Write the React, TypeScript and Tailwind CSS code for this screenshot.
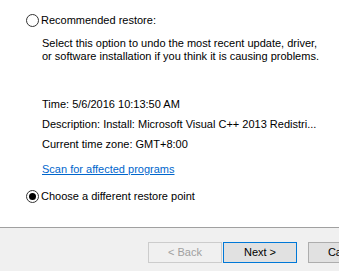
function Radio({ checked }: { checked?: boolean }) {
  return (
    <span className="w-[13px] h-[13px] rounded-full border border-[#333333] bg-white flex items-center justify-center shrink-0">
      {checked && <span className="w-[7px] h-[7px] rounded-full bg-black" />}
    </span>
  );
}

export default function App() {
  return (
    <div className="w-[339px] h-[271px] flex flex-col text-[11px] text-black font-['Liberation_Sans',Arial,sans-serif] overflow-hidden">
      <div className="h-[227px] bg-white pl-[26px] pt-[13px] whitespace-nowrap">
        <div className="flex items-center gap-[2px] h-[15px] leading-[15px]">
          <Radio />
          <span>Recommended restore:</span>
        </div>

        <div className="ml-[16px] mt-[9px] leading-[13px]">
          <p>Select this option to undo the most recent update, driver,</p>
          <p>or software installation if you think it is causing problems.</p>
        </div>

        <div className="ml-[16px] mt-[31px] leading-[20px]">
          <p>Time: 5/6/2016 10:13:50 AM</p>
          <p>Description: Install: Microsoft Visual C++ 2013 Redistri...</p>
          <p>Current time zone: GMT+8:00</p>
          <p className="mt-[5px]">
            <a className="text-[#0066cc] underline">Scan for affected programs</a>
          </p>
        </div>

        <div className="flex items-center gap-[2px] h-[15px] leading-[15px] mt-[10px]">
          <Radio checked />
          <span>Choose a different restore point</span>
        </div>
      </div>

      <div className="h-px bg-[#a0a0a0]" />

      <div className="flex-1 bg-[#f0f0f0] pt-[14px] pl-[148px] flex items-start">
        <button className="w-[74px] h-[21px] border border-[#cccccc] bg-[#f0f0f0] text-[#a0a0a0] shrink-0">
          &lt; Back
        </button>
        <button className="ml-[1px] w-[74px] h-[21px] border border-[#0078d7] bg-[#e1e1e1] shrink-0">
          Next &gt;
        </button>
        <button className="ml-[11px] w-[74px] h-[21px] border border-[#adadad] bg-[#e1e1e1] shrink-0">
          Cancel
        </button>
      </div>
    </div>
  );
}
